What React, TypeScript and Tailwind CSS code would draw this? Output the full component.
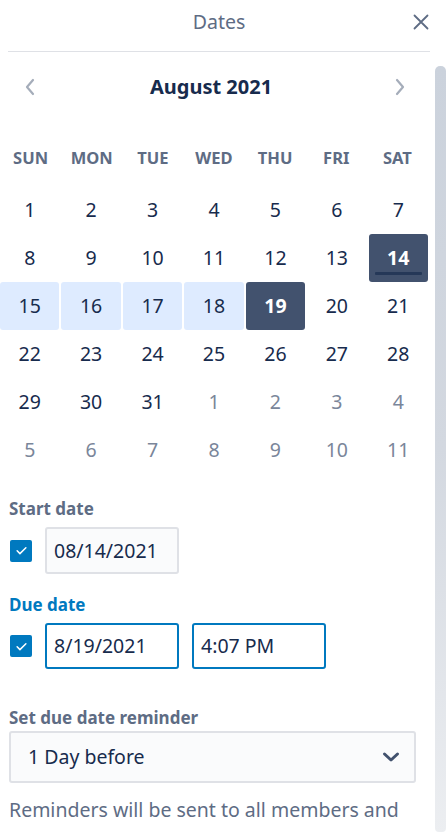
import React from 'react';

const font = { fontFamily: '"Noto Sans", "Open Sans", sans-serif' };

const weekdays = ['SUN', 'MON', 'TUE', 'WED', 'THU', 'FRI', 'SAT'];

type Day = { n: number; muted?: boolean };

const buildDays = (): Day[] => {
  const days: Day[] = [];
  for (let i = 1; i <= 31; i++) days.push({ n: i });
  for (let i = 1; i <= 11; i++) days.push({ n: i, muted: true });
  return days;
};

const Check = () => (
  <div className="w-[22px] h-[22px] rounded-[2px] bg-[#0079bf] flex items-center justify-center shrink-0">
    <svg width="15" height="15" viewBox="0 0 24 24" fill="none" stroke="white" strokeWidth="2.4" strokeLinecap="round" strokeLinejoin="round">
      <path d="M5 12.5l4.5 4.5L19 7.5" />
    </svg>
  </div>
);

const App: React.FC = () => {
  const days = buildDays();

  return (
    <div className="w-[446px] h-[833px] bg-white overflow-hidden text-[#172b4d]" style={font}>
      {/* header */}
      <div className="h-[44px] flex items-center justify-center relative">
        <span className="text-[19.5px] text-[#5e6c84] ml-[-8px]">Dates</span>
        <button className="absolute right-[17px] top-[14px] text-[#5e6c84]">
          <svg width="16" height="16" viewBox="0 0 16 16" fill="none" stroke="currentColor" strokeWidth="1.8" strokeLinecap="round">
            <path d="M1.5 1.5l13 13M14.5 1.5l-13 13" />
          </svg>
        </button>
      </div>
      <div className="mx-[8px] mr-[16px] h-[1px] bg-[#dfe1e6] mt-[7px]" />

      <div className="flex">
        <div className="w-[430px] shrink-0">
          {/* month nav */}
          <div className="h-[68px] flex items-center justify-between px-[23px] mt-[1px]">
            <svg width="14" height="18" viewBox="0 0 14 18" fill="none" stroke="#a5adba" strokeWidth="2.2" strokeLinecap="round" strokeLinejoin="round">
              <path d="M10 2L4 9l6 7" />
            </svg>
            <span className="text-[20px] font-bold text-[#172b4d] ml-[-8px]">August 2021</span>
            <svg width="14" height="18" viewBox="0 0 14 18" fill="none" stroke="#a5adba" strokeWidth="2.2" strokeLinecap="round" strokeLinejoin="round">
              <path d="M4 2l6 7-6 7" />
            </svg>
          </div>

          {/* weekdays */}
          <div className="grid grid-cols-7 w-[428px] mt-[25px]">
            {weekdays.map((w) => (
              <div key={w} className="h-[24px] flex items-center justify-center text-[16.5px] font-bold text-[#5e6c84]">
                {w}
              </div>
            ))}
          </div>

          {/* days */}
          <div className="grid grid-cols-7 w-[428px] gap-x-[2px] gap-y-0 mt-[16px]">
            {days.map((d, i) => {
              const inRange = !d.muted && d.n >= 15 && d.n <= 18;
              const selected = !d.muted && (d.n === 14 || d.n === 19);
              let cls = 'h-[48px] flex items-center justify-center text-[19.5px] rounded-[3px] relative ';
              if (selected) cls += 'bg-[#42526e] text-white font-bold';
              else if (inRange) cls += 'bg-[#deebff] text-[#172b4d]';
              else if (d.muted) cls += 'text-[#7a869a]';
              else cls += 'text-[#172b4d]';
              return (
                <div key={i} className={cls}>
                  {d.n}
                  {!d.muted && d.n === 14 && (
                    <span className="absolute left-[6px] right-[6px] bottom-[7px] h-[3px] bg-[#253858] rounded-[1px]" />
                  )}
                </div>
              );
            })}
          </div>

          {/* start date */}
          <div className="px-[9px] mt-[24px]">
            <div className="text-[17px] font-bold text-[#5e6c84] leading-[22px]">Start date</div>
            <div className="flex items-center gap-[13px] mt-[7px] ml-[1px]">
              <Check />
              <div className="w-[134px] h-[47px] border-2 border-[#dfe1e6] bg-[#fafbfc] rounded-[3px] flex items-center px-[7px] text-[19.5px] text-[#172b4d]">
                08/14/2021
              </div>
            </div>

            <div className="text-[17px] font-bold text-[#0079bf] leading-[22px] mt-[20px]">Due date</div>
            <div className="flex items-center gap-[13px] mt-[7px] ml-[1px]">
              <Check />
              <div className="w-[134px] h-[46px] border-2 border-[#0079bf] bg-white rounded-[3px] flex items-center px-[7px] text-[19.5px] text-[#172b4d]">
                8/19/2021
              </div>
              <div className="w-[134px] h-[46px] border-2 border-[#0079bf] bg-white rounded-[3px] flex items-center px-[7px] text-[19.5px] text-[#172b4d]">
                4:07 PM
              </div>
            </div>

            <div className="text-[17px] font-bold text-[#5e6c84] leading-[22px] mt-[38px]">Set due date reminder</div>
            <div className="mt-[2px] w-[407px] h-[52px] border-2 border-[#dfe1e6] bg-[#fafbfc] rounded-[3px] flex items-center justify-between pl-[17px] pr-[13px] text-[19.5px] text-[#172b4d]">
              <span>1 Day before</span>
              <svg width="20" height="20" viewBox="0 0 20 20" fill="none" stroke="#42526e" strokeWidth="3" strokeLinecap="round" strokeLinejoin="round">
                <path d="M3.5 7L10 13l6.5-6" />
              </svg>
            </div>
            <div className="mt-[12px] text-[19.5px] text-[#5e6c84] whitespace-nowrap">
              Reminders will be sent to all members and
            </div>
          </div>
        </div>

        {/* scrollbar */}
        <div className="w-[16px] flex justify-end pt-[14px]">
          <div className="w-[11px] h-[766px] rounded-t-[5px] rounded-b-[4px] bg-gradient-to-b from-[#cbd2dc] via-[#d3d8e0] to-[#eceef1]" />
        </div>
      </div>
    </div>
  );
};

export default App;
